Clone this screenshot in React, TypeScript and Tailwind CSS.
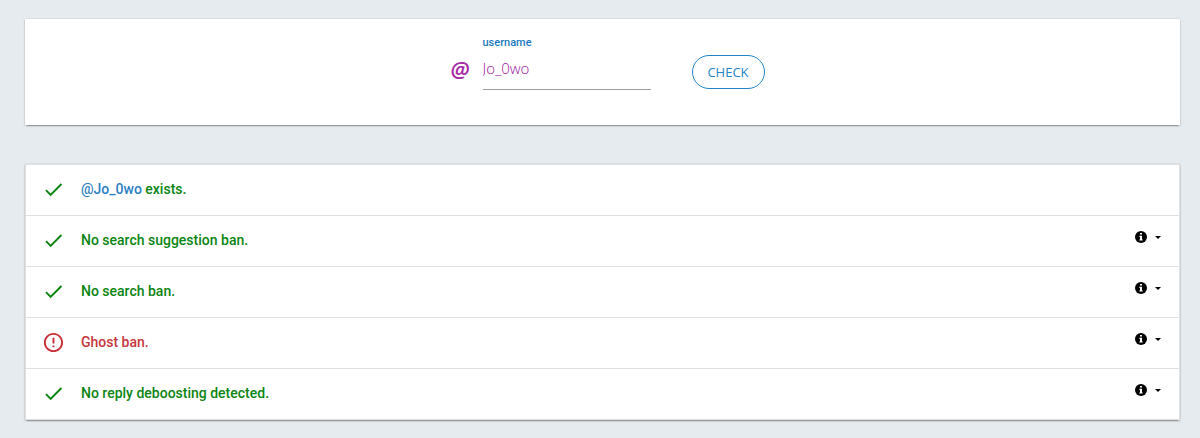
import { MdCheck, MdErrorOutline } from "react-icons/md";

const SHADOW =
  "shadow-[0_1px_2px_0_rgba(0,0,0,0.2),0_3px_1px_-2px_rgba(0,0,0,0.2),0_0_2px_0_rgba(0,0,0,0.1)]";

const results = [
  { text: "exists.", user: "@Jo_0wo", ok: true, info: false },
  { text: "No search suggestion ban.", ok: true, info: true },
  { text: "No search ban.", ok: true, info: true },
  { text: "Ghost ban.", ok: false, info: true },
  { text: "No reply deboosting detected.", ok: true, info: true },
];

function InfoIcon() {
  return (
    <svg width="12" height="12" viewBox="0 0 12 12" aria-hidden="true">
      <circle cx="6" cy="6" r="6" fill="#000" />
      <path d="M5 2h2v1.6H5zM4.4 4.8H7v3.6h.7v1.1H4.3V8.4H5V5.9h-.6z" fill="#fff" />
    </svg>
  );
}

function CaretIcon() {
  return (
    <svg width="6" height="3" viewBox="0 0 6 3" aria-hidden="true">
      <path d="M0 0h6L3 3z" fill="#000" />
    </svg>
  );
}

function SearchCard() {
  return (
    <form
      className={`flex justify-center bg-white pt-4 pb-[35px] pl-2.5 ${SHADOW}`}
      onSubmit={(e) => e.preventDefault()}
    >
      <span className="mt-[22px] w-8 font-['Open_Sans',sans-serif] text-[22px] leading-6 font-semibold text-[#a626a6] italic">
        @
      </span>
      <div className="flex w-42 flex-col">
        <label htmlFor="username" className="text-[11px] leading-4 font-medium text-[#1a7abf]">
          username
        </label>
        <input
          id="username"
          defaultValue="Jo_0wo"
          className="h-[39px] w-full border-b border-[#9e9e9e] pb-1 font-['Open_Sans',sans-serif] text-[15px] font-light text-[#9c169c] outline-none"
        />
      </div>
      <button
        type="submit"
        className="mt-5 ml-[41px] h-[34px] w-[73px] rounded-full border border-[#2185c5] pt-0.5 font-['Open_Sans',sans-serif] text-[13px] text-[#2185c5]"
      >
        CHECK
      </button>
    </form>
  );
}

export default function App() {
  return (
    <main className="min-h-screen bg-[#e5ebef] pt-[19px] pr-5 pb-[18px] pl-[25px] font-[Roboto,sans-serif]">
      <SearchCard />

      <ul className={`mt-[39px] border border-[#e0e0e0] bg-white ${SHADOW}`}>
        {results.map(({ text, user, ok, info }) => (
          <li
            key={text}
            className="flex h-[51px] items-center border-b border-[#e0e0e0] pr-[18px] pb-0.5 pl-4 last:h-[50px] last:border-b-0"
          >
            <span className={`flex w-[39px] pt-px ${ok ? "text-[#0b8512]" : "text-[#c62f35]"}`}>
              {ok ? <MdCheck size={23} /> : <MdErrorOutline size={23} />}
            </span>
            <span
              className={`text-sm font-medium ${ok ? "text-[#0b8512]" : "text-[#c5383d]"}`}
            >
              {user && (
                <a href="#profile" className="text-[#2a80c4]">
                  {user}
                </a>
              )}{" "}
              {text}
            </span>
            {info && (
              <button
                type="button"
                aria-label="Details"
                className="mb-1.5 ml-auto flex items-center gap-2 text-black"
              >
                <InfoIcon />
                <CaretIcon />
              </button>
            )}
          </li>
        ))}
      </ul>
    </main>
  );
}
